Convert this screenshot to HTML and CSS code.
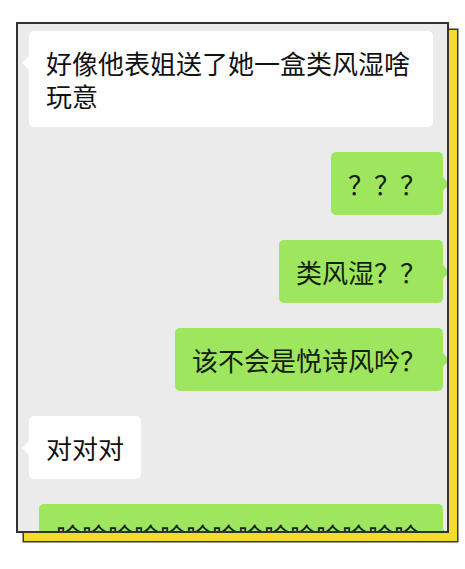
FILE: index.html
```html
<!DOCTYPE html>
<html>
<head>
<meta name="viewport" content="width=device-width, initial-scale=1">
<link rel="stylesheet" href="styles.css">
</head>
<body>

<div class="frame">
  <div class="chat">
    <div class="msg left">好像他表姐送了她一盒类风湿啥玩意</div>
    <div class="msg right">？？？</div>
    <div class="msg right">类风湿？？</div>
    <div class="msg right">该不会是悦诗风吟？</div>
    <div class="msg left">对对对</div>
    <div class="msg right">啥啥啥啥啥啥啥啥啥啥啥啥啥啥啥啥啥啥</div>
  </div>
</div>

</body>
</html>
```

FILE: styles.css
```css
body {
  margin: 0;
  min-height: 569px;
  background: #fff;
  font-family: "Noto Sans CJK SC", "Noto Sans", sans-serif;
}

* {
  box-sizing: border-box;
}

.frame {
  margin: 22px 0 36px 16px;
  width: 433px;
  height: 511px;
}

.chat {
  width: 100%;
  height: 100%;
  background: #ebebeb;
  border: 2px solid #333;
  /* yellow offset card behind the screenshot, with its dark outline */
  box-shadow: 8px 8px 0 0 #f5dc2a, 8px 8px 0 1.5px #3b3626;
  overflow: hidden;
  display: flex;
  flex-direction: column;
  gap: 25px;
  padding: 7px 4px 0 11px;
}

.msg {
  position: relative;
  flex-shrink: 0;
  max-width: 404px;
  padding: 15px 17px;
  font-size: 26px;
  line-height: 33px;
  color: #111;
  border-radius: 5px;
}

.msg::before {
  content: "";
  position: absolute;
  top: 25px;
  border-top: 7px solid transparent;
  border-bottom: 7px solid transparent;
}

.left {
  align-self: flex-start;
  background: #fff;
}

.left::before {
  left: -7px;
  border-right: 7px solid #fff;
}

.right {
  align-self: flex-end;
  background: #9ee65e;
  color: #14200c;
}

.right::before {
  right: -6px;
  border-left: 6px solid #9ee65e;
}
```
